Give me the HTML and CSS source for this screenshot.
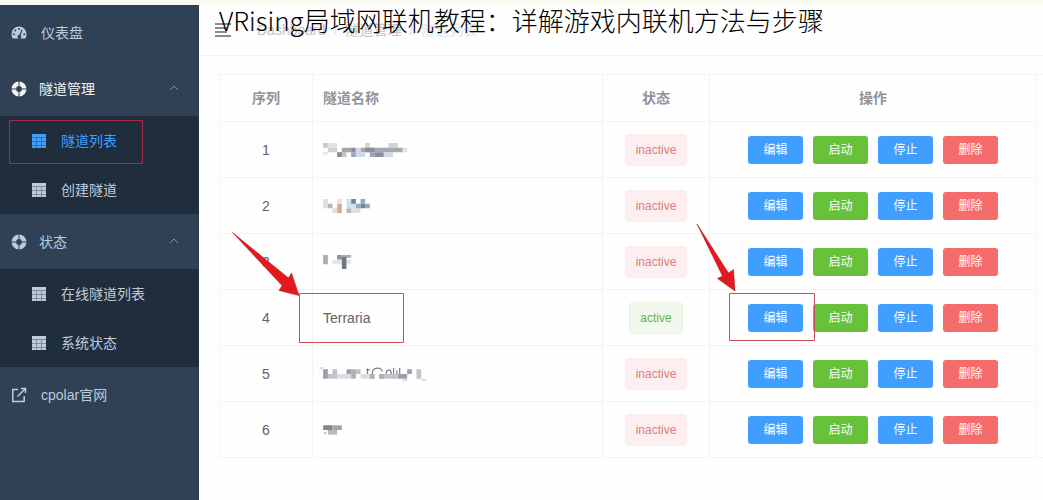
FILE: index.html
```
<!DOCTYPE html>
<html lang="zh-CN">
<head>
<meta charset="utf-8">
<title>隧道列表</title>
<link rel="stylesheet" href="styles.css">
</head>
<body>
<svg class="defs" aria-hidden="true">
  <symbol id="i-dash" viewBox="0 0 16 16"><path fill="currentColor" fill-rule="evenodd" d="M8 1.500a7.500 7.500 0 0 0-7.500 7.700c0 1.500.5 3.300 1.200 4.300h12.600c.7-1 1.200-2.800 1.200-4.300A7.500 7.500 0 0 0 8 1.500zM8 3a1 1 0 1 1 0 2 1 1 0 0 1 0-2zM4.300 4.500a1 1 0 1 1 0 2 1 1 0 0 1 0-2zM2.800 8.300a1 1 0 1 1 0 2 1 1 0 0 1 0-2zM13.200 8.300a1 1 0 1 1 0 2 1 1 0 0 1 0-2zM10.600 4.600l1 .5-2 5.300a1.800 1.800 0 1 1-1.300-.5z"/></symbol>
  <symbol id="i-ring" viewBox="0 0 16 16"><circle cx="8" cy="8" r="5.200" fill="none" stroke="currentColor" stroke-width="4.600"/><path stroke="#304156" stroke-width="1" d="M8 0v5M8 11v5M0 8h5M11 8h5"/></symbol>
  <symbol id="i-table" viewBox="0 0 16 16"><path fill="currentColor" fill-opacity=".6" d="M1 1h14v14H1z"/><path fill="currentColor" d="M1 1h14v3H1zM1 5h4v3H1zM6 5h4v3H6zM11 5h4v3h-4zM1 9h4v3H1zM6 9h4v3H6zM11 9h4v3h-4zM1 13h4v2H1zM6 13h4v2H6zM11 13h4v2h-4z"/></symbol>
  <symbol id="i-link" viewBox="0 0 16 16"><path fill="none" stroke="currentColor" stroke-width="1.500" d="M7 2.500H1.800v12h11.400V9M6.500 9.500l8-8M10 1.500h4.500V6"/></symbol>
  <symbol id="i-up" viewBox="0 0 10 10"><path fill="none" stroke="currentColor" d="M1 6l4-4 4 4"/></symbol>
</svg>
<div class="app">
  <nav class="side">
    <a class="item" href="#"><svg class="ico"><use href="#i-dash"/></svg><span>仪表盘</span></a>
    <button class="item group open" type="button" aria-expanded="true"><svg class="ico"><use href="#i-ring"/></svg><span>隧道管理</span><svg class="caret"><use href="#i-up"/></svg></button>
    <div class="sub">
      <a class="item current" href="#"><svg class="ico"><use href="#i-table"/></svg><span>隧道列表</span></a>
      <a class="item" href="#"><svg class="ico"><use href="#i-table"/></svg><span>创建隧道</span></a>
    </div>
    <button class="item group" type="button" aria-expanded="true"><svg class="ico"><use href="#i-ring"/></svg><span>状态</span><svg class="caret"><use href="#i-up"/></svg></button>
    <div class="sub">
      <a class="item" href="#"><svg class="ico"><use href="#i-table"/></svg><span>在线隧道列表</span></a>
      <a class="item" href="#"><svg class="ico"><use href="#i-table"/></svg><span>系统状态</span></a>
    </div>
    <a class="item" href="#"><svg class="ico"><use href="#i-link"/></svg><span>cpolar官网</span></a>
  </nav>
  <main class="main">
    <header class="bar">
      <button class="burger" type="button" aria-label="菜单"><svg viewBox="0 0 16 16"><path stroke="currentColor" stroke-width="1.300" d="M0 2h16M0 6h12M0 10h12M0 14h16"/></svg></button>
      <div class="crumbs"><a href="#">Dashboard</a><i>/</i><span>隧道管理</span><i>/</i><span class="here">隧道列表</span></div>
    </header>
    <div class="frame">
      <table class="grid">
        <thead><tr><th class="c-no">序列</th><th class="c-name">隧道名称</th><th class="c-state">状态</th><th class="c-act">操作</th></tr></thead>
        <tbody>
          <tr><td>1</td><td class="c-name"><svg class="mosaic" viewBox="0 0 22 3"><path fill="#c6c6c6" d="M0 0h1v1H0zM3 2h2v1H3z"/><path fill="#e2e2e2" d="M1 0h2v1H1zM0 2h1v.4H0zM17 1h1v1h-1z"/><path fill="#d2d2d4" d="M1 1h2v1H1zM9 0h1v1H9zM14 0h2v1h-2z"/><path fill="#a6a6ae" d="M4 1h2v1H4zM8 1h9v1H8z"/><path fill="#8c8d98" d="M6 1h1v1H6zM3 2h1v1H3zM9 1h2v1H9zM11 2h2v1h-2z"/><path fill="#cdd8ea" d="M7 1h1v1H7zM7 2h2v1H7zM13 2h2v1h-2z"/><path fill="#97a3c0" d="M6 2h1v1H6zM10 2h1v1h-1z"/></svg></td><td><span class="tag bad">inactive</span></td><td><div class="acts"><button class="edit">编辑</button><button class="start">启动</button><button class="stop">停止</button><button class="del">删除</button></div></td></tr>
          <tr><td>2</td><td class="c-name"><svg class="mosaic" viewBox="0 0 22 3"><path fill="#dedede" d="M0 0h1v2H0zM2 2h1v1H2zM6 2h2v1H6z"/><path fill="#b8b8b8" d="M1 1h1v1H1zM5 2h1v1H5z"/><path fill="#f0e0d6" d="M3 0h1v1H3z"/><path fill="#cfaf9c" d="M3 1h1v2H3z"/><path fill="#cbe1f4" d="M5 0h1v2H5zM6 1h1v1H6z"/><path fill="#71839a" d="M6 0h1v1H6zM8 1h1v1H8z"/><path fill="#98a9bc" d="M8 0h1v1H8zM7 1h1v1H7zM9 1h1v1H9z"/></svg></td><td><span class="tag bad">inactive</span></td><td><div class="acts"><button class="edit">编辑</button><button class="start">启动</button><button class="stop">停止</button><button class="del">删除</button></div></td></tr>
          <tr><td>3</td><td class="c-name"><svg class="mosaic" viewBox="0 0 22 3"><path fill="#a9aeb3" d="M0 0h1v2H0zM4 0h2v.6H4z"/><path fill="#8b9197" d="M3 0h1v1H3z"/><path fill="#dfe9ef" d="M2 1h2v1H2zM5 1h1v1H5z"/><path fill="#747a80" d="M4 .4h1V3H4z"/></svg></td><td><span class="tag bad">inactive</span></td><td><div class="acts"><button class="edit">编辑</button><button class="start">启动</button><button class="stop">停止</button><button class="del">删除</button></div></td></tr>
          <tr><td>4</td><td class="c-name">Terraria</td><td><span class="tag good">active</span></td><td><div class="acts"><button class="edit">编辑</button><button class="start">启动</button><button class="stop">停止</button><button class="del">删除</button></div></td></tr>
          <tr><td>5</td><td class="c-name"><svg class="mosaic" viewBox="0 0 22 3"><path fill="#9d9dac" d="M0 .5h1v2H0zM18 .5h1v1h-1zM5 .5h1v1H5zM16 1.500h2v1h-2z"/><path fill="#c2c2ca" d="M1 1.500h2v1H1zM2 .5h1v1H2zM20 .5h1v2h-1zM7 .5h1v1H7zM12 1.500h4v1h-4z"/><path fill="#dcdce0" d="M3 1.500h3v1H3zM8 1.500h3v1H8zM-.8 0h.8v.5h-.8zM21 2.500h1v.5h-1zM17 2.500h1v.5h-1z"/><path fill="#b3b1a6" d="M6 .5h1v2H6zM10 1.500h1v1h-1zM12 1.500h1v1h-1z"/><path fill="none" stroke="#777a7e" stroke-width=".25" d="M9.500.3v1.200M9.200.6h.8M10.500 1.500c0-1.600 2-1.600 2.200-.5M13.500 1.500c0-1.100 1.100-1.100 1.100 0M15.100.2v1.300M15.800.7v.8M16.400.2v1.300"/></svg></td><td><span class="tag bad">inactive</span></td><td><div class="acts"><button class="edit">编辑</button><button class="start">启动</button><button class="stop">停止</button><button class="del">删除</button></div></td></tr>
          <tr><td>6</td><td class="c-name"><svg class="mosaic" viewBox="0 0 22 3"><path fill="#85858e" d="M0 .5h2v1H0zM.3 2h.3v.3H.3z"/><path fill="#a5a5aa" d="M2 .5h2v1H2z"/><path fill="#b9b9be" d="M1 1.500h2v1H1z"/></svg></td><td><span class="tag bad">inactive</span></td><td><div class="acts"><button class="edit">编辑</button><button class="start">启动</button><button class="stop">停止</button><button class="del">删除</button></div></td></tr>
        </tbody>
      </table>
    </div>
  </main>
</div>
<h1 class="headline">VRising局域网联机教程：详解游戏内联机方法与步骤</h1>
<svg class="marks" width="1043" height="500" aria-hidden="true">
  <g fill="none" stroke="#c8505a"><path stroke="#a82c4a" d="M9.500 120.500h133v43H9.500z"/><path d="M299.500 293.500h104v49h-104z"/><path d="M729.500 293.500h85v47h-85z"/></g>
  <g fill="#e3191f" stroke="#b32226" stroke-width=".6"><path d="M232.500 232.500L288.500 278l3-5 7.500 22.500-20-5 3-5z"/><path d="M697 224l31.500 49 5-3.500 1.500 21.500-17.500-12.500 5-2.500z"/></g>
</svg>
</body>
</html>
```
FILE: styles.css
```
* { box-sizing: border-box; }
body {
  margin: 0;
  min-height: 100vh;
  background: #fefefe;
  font: 14px/20px "Liberation Sans", "Noto Sans CJK SC", sans-serif;
  color: #606266;
}
button { font: inherit; border: 0; cursor: pointer; }
a { color: inherit; text-decoration: none; }
.defs { position: absolute; width: 0; height: 0; }
.app {
  display: flex;
  min-height: 100vh;
  border-top: 5px solid #f8faf1;
}
.side {
  flex: 0 0 199px;
  background: #304156;
  color: #bfcbd9;
}
.item {
  display: flex;
  align-items: center;
  gap: 14px;
  width: 100%;
  height: 56px;
  padding: 0 20px 0 11px;
  background: none;
  color: inherit;
  text-align: left;
}
.group { height: 55px; gap: 12px; }
.open { color: #f4f4f5; }
.ico { width: 16px; height: 16px; flex: none; }
.caret { width: 10px; height: 10px; margin-left: auto; color: #8492a3; }
.sub { background: #1f2d3d; }
.sub .item { height: 49px; padding-left: 31px; }
.sub .current { color: #409eff; }
.main { flex: 1; min-width: 0; }
.bar {
  display: flex;
  align-items: center;
  gap: 26px;
  height: 51px;
  padding: 0 16px;
  border-bottom: 1px solid #f3f3f3;
}
.burger { width: 16px; height: 16px; padding: 0; background: none; color: #666; }
.burger svg { display: block; width: 16px; height: 16px; }
.crumbs { display: flex; gap: 8px; color: #c0c2c7; }
.crumbs i { font-style: normal; color: #dcdfe6; }
.crumbs .here { color: #dae4f0; }
.frame {
  margin: 18px 0 0 20px;
  padding-right: 6px;
  border: 1px solid #f3f3f4;
  border-right: 0;
}
.grid {
  width: 100%;
  table-layout: fixed;
  border-collapse: separate;
  border-spacing: 0;
  text-align: center;
}
.grid th { height: 47px; padding: 0; color: #909399; }
.grid td { height: 56px; padding: 0; }
.grid th, .grid td { border-right: 1px solid #f3f3f4; border-bottom: 1px solid #f3f3f4; }
.grid tr:last-child td { height: 55px; border-bottom: 0; }
.grid thead tr th { border-bottom: 1px solid #f3f3f4; }
.c-no { width: 93px; }
.c-state { width: 107px; }
.c-act { width: 327px; }
.grid .c-name { padding-left: 10px; text-align: left; }
.mosaic { display: block; width: 103px; height: 14px; overflow: visible; }
.tag {
  display: inline-block;
  padding: 0 10px;
  border: 1px solid;
  border-radius: 4px;
  font-size: 12px;
  line-height: 30px;
}
.bad { color: #d98080; background: #fdefef; border-color: #fdeaea; }
.good { color: #6cb24a; background: #f0f9eb; border-color: #e8f6e0; }
.acts { display: flex; justify-content: center; gap: 10px; }
.acts button {
  width: 55px;
  height: 28px;
  padding: 0;
  border-radius: 3px;
  color: #fff;
  font-size: 12px;
}
.acts .edit, .acts .stop { background: #409eff; }
.acts .start { background: #67c23a; }
.acts .del { background: #f56c6c; }
.headline {
  position: absolute;
  top: 2px;
  left: 219px;
  margin: 0;
  font: 200 26px/36px "Noto Sans CJK SC", "Noto Sans", sans-serif;
  color: #000;
  white-space: nowrap;
}
.marks { position: absolute; top: 0; left: 0; pointer-events: none; }
```
